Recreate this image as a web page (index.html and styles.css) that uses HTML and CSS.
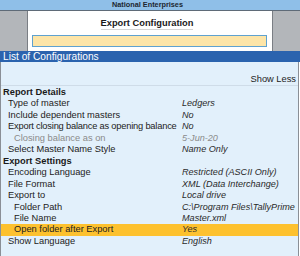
FILE: index.html
```html
<!DOCTYPE html>
<html lang="en">
<head>
    <meta charset="UTF-8">
    <meta name="viewport" content="width=device-width, initial-scale=1.0">
    <title>Export Configuration</title>
    <link rel="stylesheet" href="styles.css">
</head>
<body>
    <div class="topbar">National Enterprises</div>

    <div class="header">
        <div class="side"></div>
        <div class="panel">
            <div class="title"><span>Export Configuration</span></div>
            <div class="input"></div>
        </div>
        <div class="side"></div>
    </div>

    <div class="listbar">List of Configurations</div>

    <div class="content">
        <div class="show-less">Show Less</div>

        <div class="row head"><span class="label">Report Details</span></div>
        <div class="row"><span class="label l1">Type of master</span><span class="value">Ledgers</span></div>
        <div class="row"><span class="label l1">Include dependent masters</span><span class="value">No</span></div>
        <div class="row"><span class="label l1 long">Export closing balance as opening balance</span><span class="value">No</span></div>
        <div class="row muted"><span class="label l2">Closing balance as on</span><span class="value">5-Jun-20</span></div>
        <div class="row"><span class="label l1">Select Master Name Style</span><span class="value">Name Only</span></div>

        <div class="row head"><span class="label">Export Settings</span></div>
        <div class="row"><span class="label l1">Encoding Language</span><span class="value">Restricted (ASCII Only)</span></div>
        <div class="row"><span class="label l1">File Format</span><span class="value">XML (Data Interchange)</span></div>
        <div class="row"><span class="label l1">Export to</span><span class="value">Local drive</span></div>
        <div class="row"><span class="label l2">Folder Path</span><span class="value">C:\Program Files\TallyPrime</span></div>
        <div class="row"><span class="label l2">File Name</span><span class="value">Master.xml</span></div>
        <div class="row selected"><span class="label l2">Open folder after Export</span><span class="value">Yes</span></div>
        <div class="row"><span class="label l1">Show Language</span><span class="value">English</span></div>
    </div>
</body>
</html>
```

FILE: styles.css
```css
body {
    margin: 0;
    width: 300px;
    height: 256px;
    overflow: hidden;
    background: #ffffff;
    font-family: "Liberation Sans", Arial, sans-serif;
    color: #222;
}

.topbar {
    height: 10px;
    line-height: 10px;
    background: #8fbfe8;
    border-bottom: 1px solid #5f6b78;
    text-align: center;
    font-size: 7.3px;
    font-weight: bold;
    color: #1c2630;
    padding-right: 5px;
}

.header {
    display: flex;
    height: 40px;
}

.side {
    width: 27px;
    background: #b3b6ba;
}

.panel {
    flex: 1;
    background: #fff;
    border-left: 1px solid #7a7e84;
    border-right: 1px solid #7a7e84;
    padding-top: 7px;
}

.title {
    text-align: center;
    font-size: 9.3px;
    font-weight: bold;
    color: #1a1a1a;
    padding-right: 6px;
    height: 17px;
}

.title span {
    border-bottom: 1px solid #d4d4d4;
    padding-bottom: 1px;
}

.input {
    height: 10px;
    margin: 0 5px 0 4px;
    background: #fde5a8;
    border: 1px solid #5fa2d0;
}

.listbar {
    height: 11px;
    line-height: 11px;
    background: #2b63ae;
    color: #fff;
    font-size: 10.2px;
    padding-left: 3px;
}

.content {
    height: 191px;
    margin-right: 1px;
    background: #e2f0fb;
    border: 1px solid #8a8f96;
    border-top: none;
    padding-top: 12px;
    font-size: 9.3px;
}

.show-less {
    text-align: right;
    padding-right: 2px;
    line-height: 11.5px;
    height: 11px;
    border-bottom: 1px solid #cfdce8;
    margin-bottom: 1px;
    color: #222;
}

.row {
    display: grid;
    grid-template-columns: 181px 1fr;
    line-height: 11.46px;
    height: 11.46px;
    white-space: nowrap;
}

.label {
    padding-left: 2px;
    overflow: hidden;
}

.l1 {
    padding-left: 7px;
}

.l2 {
    padding-left: 13px;
}

.long {
    letter-spacing: -0.2px;
}

.head .label {
    font-weight: bold;
    color: #1a1a1a;
}

.value {
    font-style: italic;
    color: #2a2a2a;
    font-size: 9.1px;
}

.muted .label,
.muted .value {
    color: #8a8a8a;
}

.selected {
    background: #fdc12e;
}
```
